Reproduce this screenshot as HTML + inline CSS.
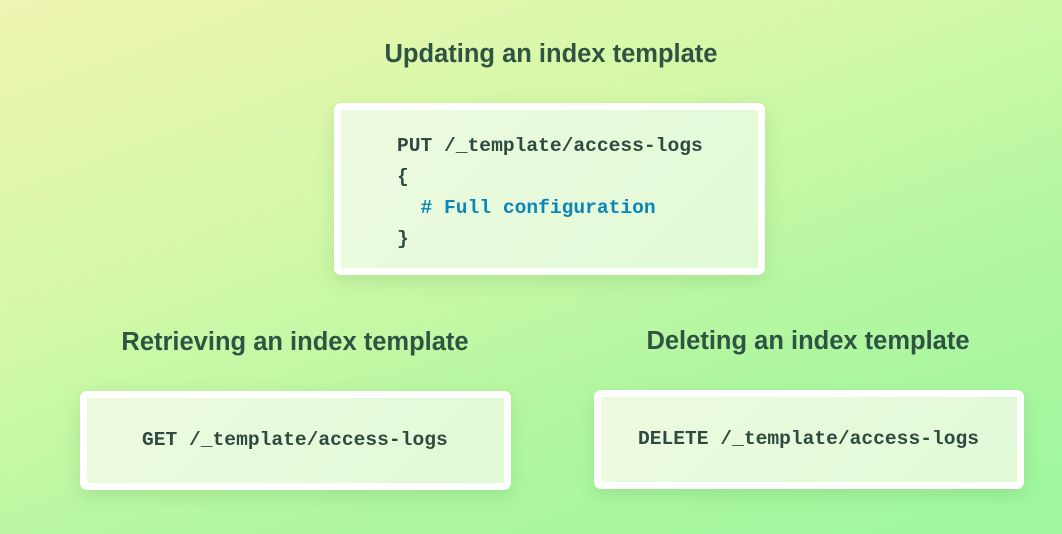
<!DOCTYPE html>
<html><head><style>
html,body{margin:0;padding:0}
body{width:1062px;height:534px;overflow:hidden;position:relative;
background:linear-gradient(160deg,#f0f5b2 0%,#d4f8a8 35%,#b0f7a0 70%,#9ef79e 100%);
font-family:"Liberation Sans",sans-serif}
.t{position:absolute;font-weight:bold;font-size:25.5px;color:#2e5444;white-space:nowrap;transform:translateX(-50%)}
.box{position:absolute;box-sizing:border-box;border:7px solid #fff;border-radius:7px;
background:linear-gradient(135deg,#eefae0,#e0fad6);box-shadow:0 6px 18px rgba(60,140,60,.18)}
.code{position:absolute;font-family:"Liberation Mono",monospace;font-weight:bold;font-size:19.6px;color:#2f4a40;white-space:pre}
.c{color:#0b86b8}
</style></head><body>
<div class="t" style="left:551px;top:40px">Updating an index template</div>
<div class="box" style="left:334px;top:103px;width:431px;height:172px"></div>
<div class="code" style="left:397px;top:131px;line-height:31px">PUT /_template/access-logs
{
  <span class="c"># Full configuration</span>
}</div>
<div class="t" style="left:295px;top:328px">Retrieving an index template</div>
<div class="box" style="left:80px;top:391px;width:431px;height:99px"></div>
<div class="code" style="left:142px;top:429px">GET /_template/access-logs</div>
<div class="t" style="left:808px;top:327px">Deleting an index template</div>
<div class="box" style="left:594px;top:390px;width:430px;height:99px"></div>
<div class="code" style="left:638px;top:428px">DELETE /_template/access-logs</div>
</body></html>
